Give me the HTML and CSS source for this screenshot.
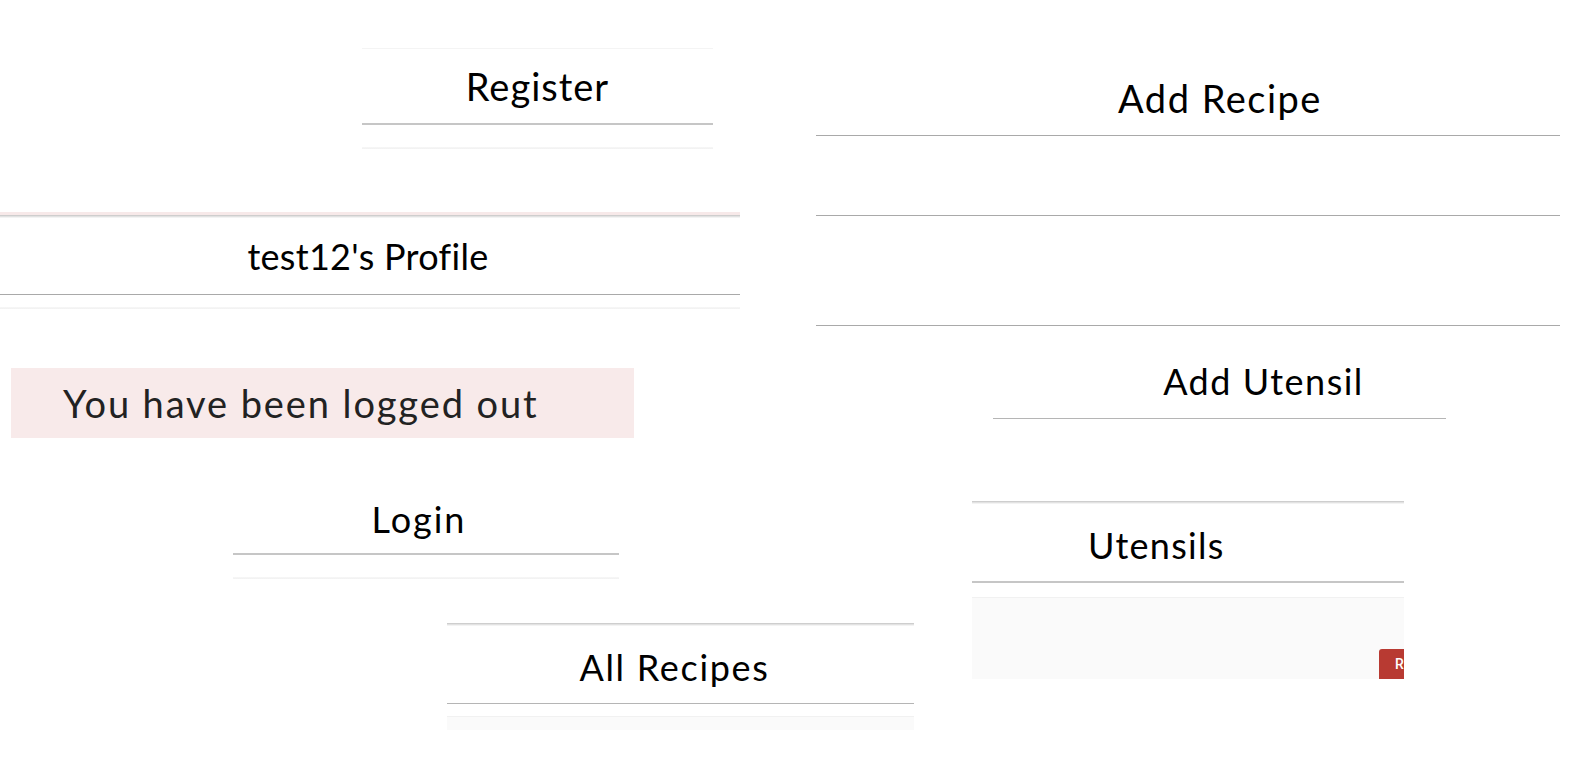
FILE: index.html
```html
<!DOCTYPE html>
<html lang="en">
<head>
<meta charset="utf-8">
<title>Recipes collage</title>
<link rel="stylesheet" href="styles.css">
</head>
<body>
<div class="canvas">
  <section class="frag frag-register">
    <div class="card-top faint-top"></div>
    <h2 class="title t-register">Register</h2>
    <div class="rule rule-c8"></div>
    <div class="gap g22"></div>
    <div class="faint-line"></div>
  </section>

  <section class="frag frag-profile">
    <div class="pink-top"></div>
    <div class="shadow-top"></div>
    <h2 class="title t-profile">test12's Profile</h2>
    <div class="rule rule-aa"></div>
    <div class="gap g12"></div>
    <div class="faint-line"></div>
  </section>

  <div class="frag alert">You have been logged out</div>

  <section class="frag frag-login">
    <h2 class="title t-login">Login</h2>
    <div class="rule rule-c8"></div>
    <div class="gap g22"></div>
    <div class="faint-line"></div>
  </section>

  <section class="frag frag-allrecipes">
    <div class="shadow-top"></div>
    <h2 class="title t-allrecipes">All Recipes</h2>
    <div class="rule rule-bb"></div>
    <div class="gap g12"></div>
    <div class="grey-body short"></div>
  </section>

  <section class="frag frag-utensils">
    <div class="shadow-top"></div>
    <h2 class="title t-utensils">Utensils</h2>
    <div class="rule rule-c8"></div>
    <div class="gap g14"></div>
    <div class="grey-body tall">
      <span class="red-btn">R</span>
    </div>
  </section>

  <section class="frag frag-addrecipe">
    <h2 class="title t-addrecipe">Add Recipe</h2>
    <div class="rule rule-aa"></div>
    <div class="field f79"></div>
    <div class="field f109"></div>
  </section>

  <section class="frag frag-addutensil">
    <h2 class="title t-addutensil">Add Utensil</h2>
    <div class="rule rule-bb"></div>
  </section>
</div>
</body>
</html>
```

FILE: styles.css
```css
* { box-sizing: border-box; }
html, body {
  margin: 0;
  padding: 0;
  background: #ffffff;
  width: 1570px;
  height: 764px;
  overflow: hidden;
}
body {
  font-family: "Lato", "Open Sans", sans-serif;
  color: #000;
}
.canvas {
  position: relative;
  width: 1570px;
  height: 764px;
}
.frag {
  position: absolute;
  display: flex;
  flex-direction: column;
}
.title {
  margin: 0;
  font-weight: 400;
  font-size: 36px;
  line-height: 1;
  display: flex;
  align-items: center;
  justify-content: center;
  white-space: nowrap;
}
.rule { height: 1px; width: 100%; }
.rule-c8 { height: 2px; background: #c6c6c6; }
.rule-aa { background: #a9a9a9; }
.rule-bb { background: #b5b5b5; }
.gap { width: 100%; }
.g22 { height: 22px; }
.g12 { height: 12px; }
.g14 { height: 14px; }
.faint-line {
  height: 2px;
  background: linear-gradient(#f7f7f7, #f1f1f1);
}
.faint-top { height: 1px; background: #f4f4f4; }
.pink-top { height: 3px; background: #f7e9e9; }
.shadow-top {
  height: 3px;
  background: linear-gradient(#c4c4c4, #e8e8e8 60%, #fbfbfb);
}
.grey-body {
  background: #fafafa;
  border-top: 1px solid #f1f1f1;
  position: relative;
}
.grey-body.short { height: 14px; }
.grey-body.tall { height: 82px; }

/* Register */
.frag-register { left: 362px; top: 48px; width: 351px; }
.t-register { height: 74px; font-size: 38px; letter-spacing: 1px; padding-top: 0; }

/* Profile */
.frag-profile { left: 0; top: 212px; width: 740px; }
.t-profile { height: 76px; letter-spacing: 0.3px; padding-right: 4px; }

/* Alert */
.alert {
  left: 11px;
  top: 368px;
  width: 623px;
  height: 70px;
  background: #f8eaea;
  color: #222;
  font-size: 38px;
  letter-spacing: 1.9px;
  padding-left: 52px;
  justify-content: center;
}

/* Login */
.frag-login { left: 233px; top: 480px; width: 386px; }
.t-login { height: 73px; letter-spacing: 2px; padding-right: 14px; padding-top: 4px; }

/* All Recipes */
.frag-allrecipes { left: 447px; top: 623px; width: 467px; }
.t-allrecipes { height: 77px; letter-spacing: 1.7px; padding-right: 12px; padding-top: 4px; }

/* Utensils */
.frag-utensils { left: 972px; top: 501px; width: 432px; }
.t-utensils { height: 77px; letter-spacing: 1.3px; justify-content: flex-start; padding-left: 116px; padding-top: 4px; }
.red-btn {
  position: absolute;
  left: 407px;
  top: 51px;
  width: 25px;
  height: 30px;
  background: #b83a32;
  border-radius: 3px 0 0 0;
  color: #fff;
  font-family: "Roboto", sans-serif;
  font-size: 14px;
  font-weight: 500;
  padding: 7px 0 0 16px;
  overflow: hidden;
}

/* Add Recipe */
.frag-addrecipe { left: 816px; top: 60px; width: 744px; }
.t-addrecipe { height: 75px; font-size: 38px; letter-spacing: 1.5px; padding-left: 64px; padding-top: 0; }
.field { width: 100%; border-bottom: 1px solid #a9a9a9; }
.f79 { height: 80px; }
.f109 { height: 110px; }

/* Add Utensil */
.frag-addutensil { left: 993px; top: 350px; width: 453px; }
.t-addutensil { height: 68px; letter-spacing: 1.5px; padding-left: 88px; padding-bottom: 6px; }
```
